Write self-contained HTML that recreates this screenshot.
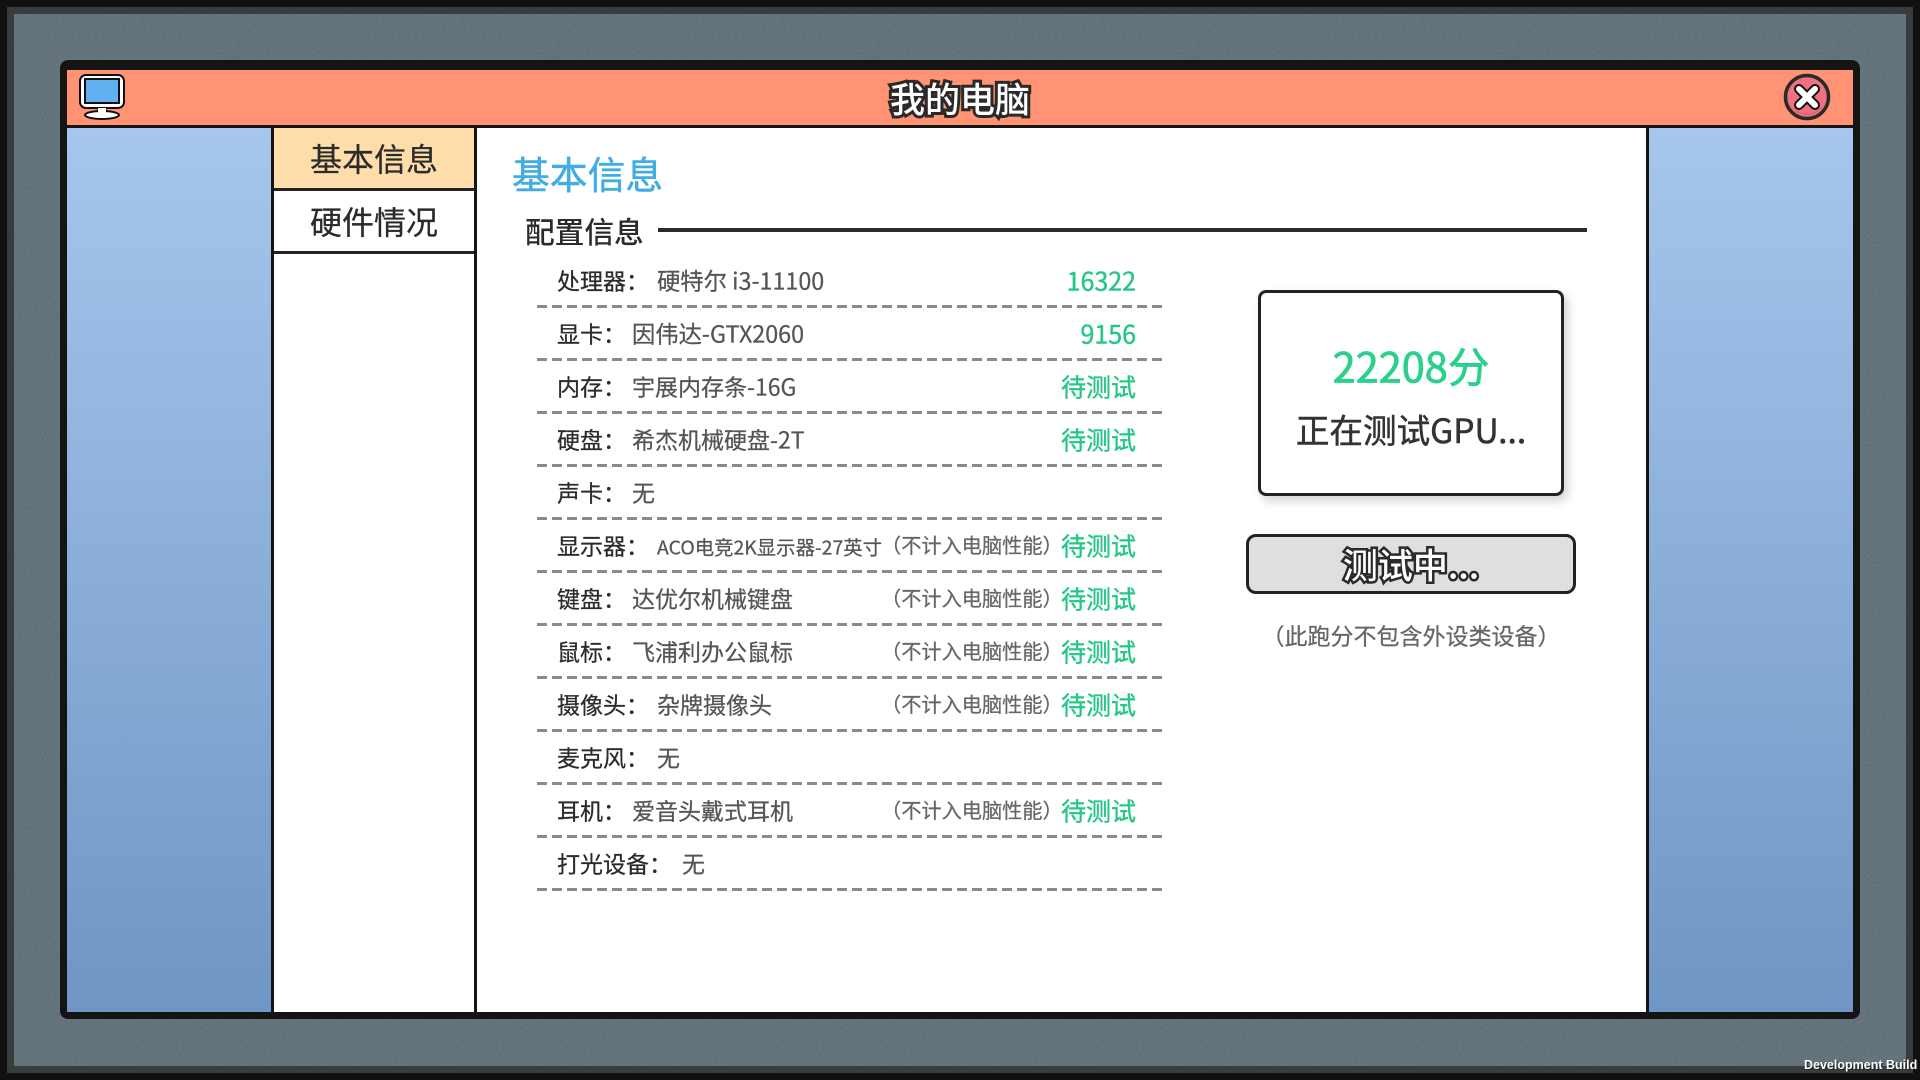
<!DOCTYPE html>
<html lang="zh">
<head>
<meta charset="utf-8">
<title>我的电脑</title>
<style>
html,body{margin:0;padding:0;width:1920px;height:1080px;overflow:hidden;background:#111}
body{position:relative;font-family:"Liberation Sans","Noto Sans CJK SC",sans-serif}
*{box-sizing:border-box}
.a{position:absolute}
.t{position:absolute;white-space:nowrap;line-height:1;font-family:"Noto Sans CJK SC","Liberation Sans",sans-serif;transform:translateY(-50%);-webkit-text-stroke:.25px currentColor}
.l{font-size:23px;color:#2b2b2b;left:557px}
.v{font-size:23px;color:#555}
.s{font-size:19.4px;color:#555}
.n{font-size:20.2px;color:#666;left:881px}
.g{font-size:25px;color:#25c785;right:784px;-webkit-text-stroke:.4px #25c785}
.d{position:absolute;left:537px;width:625px;height:3px;background:repeating-linear-gradient(90deg,#8a8a8a 0,#8a8a8a 10px,transparent 10px,transparent 15px)}
</style>
</head>
<body>
<div class="a" style="left:0;top:0;width:1920px;height:1080px;background:#111"></div>
<div class="a" style="left:7px;top:7px;width:1906px;height:1066px;background:#393c3c"></div>
<div class="a" style="left:14px;top:14px;width:1892px;height:1052px;background:#5f707b"></div>
<svg class="a" style="left:14px;top:14px" width="1892" height="1052">
<filter id="nz" color-interpolation-filters="sRGB"><feTurbulence type="fractalNoise" baseFrequency="0.8" numOctaves="2" seed="3"/><feColorMatrix type="saturate" values="0"/><feComponentTransfer><feFuncA type="linear" slope="0" intercept="0.16"/></feComponentTransfer></filter>
<rect width="1892" height="1052" filter="url(#nz)"/>
</svg>

<div class="a" style="left:60px;top:60px;width:1800px;height:959px;background:#141414;border-radius:8px"></div>
<div class="a" style="left:67px;top:70px;width:1786px;height:55px;background:#ff9373"></div>
<div class="a" style="left:67px;top:128px;width:204px;height:884px;background:linear-gradient(#a6c6ec,#7096c5)"></div>
<div class="a" style="left:1649px;top:128px;width:204px;height:884px;background:linear-gradient(#a6c6ec,#7096c5)"></div>
<div class="a" style="left:274px;top:128px;width:200px;height:884px;background:#fff"></div>
<div class="a" style="left:477px;top:128px;width:1169px;height:884px;background:#fff"></div>

<div class="a" style="left:274px;top:128px;width:200px;height:60px;background:#fddeaa"></div>
<div class="a" style="left:274px;top:188px;width:200px;height:3px;background:#222"></div>
<div class="a" style="left:274px;top:251px;width:200px;height:3px;background:#222"></div>
<div class="t" style="left:274px;width:200px;text-align:center;top:158px;font-size:32px;color:#2b2b2b">基本信息</div>
<div class="t" style="left:274px;width:200px;text-align:center;top:221px;font-size:32px;color:#2b2b2b">硬件情况</div>

<svg class="a" style="left:76px;top:72px" width="52" height="50" viewBox="0 0 52 50">
<rect x="4" y="3" width="44" height="33" rx="6" fill="#fff" stroke="#111" stroke-width="2"/>
<rect x="9" y="7" width="34" height="24" fill="#62b0f0" stroke="#111" stroke-width="2"/>
<path d="M22 36h8v7h-8z" fill="#fff" stroke="#111" stroke-width="1.5"/>
<ellipse cx="26" cy="43" rx="17" ry="4" fill="#fff" stroke="#111" stroke-width="2"/>
<rect x="22" y="36" width="8" height="6" fill="#fff"/>
</svg>

<div class="t" style="left:860px;width:200px;text-align:center;top:98px;font-size:35px;font-weight:500;color:#fff;-webkit-text-stroke:6px #2a2a2a;paint-order:stroke fill">我的电脑</div>

<svg class="a" style="left:1782px;top:72px" width="50" height="50" viewBox="0 0 50 50">
<circle cx="25" cy="25" r="21.5" fill="#f0717f" stroke="#2a2a2a" stroke-width="3.5"/>
<path d="M7 30a19 19 0 0 0 36 0a19 17 0 0 1-36 0z" fill="#d85f6e"/>
<path d="M17 17L33 33M33 17L17 33" stroke="#111" stroke-width="10" stroke-linecap="round"/>
<path d="M17 17L33 33M33 17L17 33" stroke="#fff" stroke-width="6" stroke-linecap="round"/>
</svg>

<div class="t" style="left:512px;top:173px;font-size:37.8px;color:#41ade2;-webkit-text-stroke:.5px #41ade2">基本信息</div>
<div class="t" style="left:525px;top:231px;font-size:29.7px;color:#2b2b2b;font-weight:500;-webkit-text-stroke:0">配置信息</div>
<div class="a" style="left:658px;top:228px;width:929px;height:4px;background:#2b2b2b"></div>

<div class="t l" style="top:280px">处理器：</div><div class="t v" style="left:657px;top:280px;font-size:23.3px">硬特尔 i3-11100</div><div class="t g" style="top:281px">16322</div>
<div class="d" style="top:305px"></div>
<div class="t l" style="top:333px">显卡：</div><div class="t v" style="left:632px;top:333px;font-size:23.3px">因伟达-GTX2060</div><div class="t g" style="top:334px">9156</div>
<div class="d" style="top:358px"></div>
<div class="t l" style="top:386px">内存：</div><div class="t v" style="left:632px;top:386px">宇展内存条-16G</div><div class="t g" style="top:387px">待测试</div>
<div class="d" style="top:411px"></div>
<div class="t l" style="top:439px">硬盘：</div><div class="t v" style="left:632px;top:439px">希杰机械硬盘-2T</div><div class="t g" style="top:440px">待测试</div>
<div class="d" style="top:464px"></div>
<div class="t l" style="top:492px">声卡：</div><div class="t v" style="left:632px;top:492px">无</div>
<div class="d" style="top:517px"></div>
<div class="t l" style="top:545px">显示器：</div><div class="t s" style="left:657px;top:546px">ACO电竞2K显示器-27英寸</div><div class="t n" style="top:545px">（不计入电脑性能）</div><div class="t g" style="top:546px">待测试</div>
<div class="d" style="top:570px"></div>
<div class="t l" style="top:598px">键盘：</div><div class="t v" style="left:632px;top:598px">达优尔机械键盘</div><div class="t n" style="top:598px">（不计入电脑性能）</div><div class="t g" style="top:599px">待测试</div>
<div class="d" style="top:623px"></div>
<div class="t l" style="top:651px">鼠标：</div><div class="t v" style="left:632px;top:651px">飞浦利办公鼠标</div><div class="t n" style="top:651px">（不计入电脑性能）</div><div class="t g" style="top:652px">待测试</div>
<div class="d" style="top:676px"></div>
<div class="t l" style="top:704px">摄像头：</div><div class="t v" style="left:657px;top:704px">杂牌摄像头</div><div class="t n" style="top:704px">（不计入电脑性能）</div><div class="t g" style="top:705px">待测试</div>
<div class="d" style="top:729px"></div>
<div class="t l" style="top:757px">麦克风：</div><div class="t v" style="left:657px;top:757px">无</div>
<div class="d" style="top:782px"></div>
<div class="t l" style="top:810px">耳机：</div><div class="t v" style="left:632px;top:810px">爱音头戴式耳机</div><div class="t n" style="top:810px">（不计入电脑性能）</div><div class="t g" style="top:811px">待测试</div>
<div class="d" style="top:835px"></div>
<div class="t l" style="top:863px">打光设备：</div><div class="t v" style="left:682px;top:863px">无</div>
<div class="d" style="top:888px"></div>

<div class="a" style="left:1258px;top:290px;width:306px;height:206px;background:#fff;border:3px solid #222;border-radius:8px;box-shadow:4px 5px 10px rgba(0,0,0,.18)"></div>
<div class="t" style="left:1258px;width:306px;text-align:center;top:365px;font-size:41.5px;color:#2bd08b;-webkit-text-stroke:.8px #2bd08b">22208分</div>
<div class="t" style="left:1258px;width:306px;text-align:center;top:429px;font-size:33.6px;color:#333;-webkit-text-stroke:.5px #333">正在测试GPU...</div>

<div class="a" style="left:1246px;top:534px;width:330px;height:60px;background:#dfdfdf;border:3px solid #222;border-radius:10px"></div>
<div class="t" style="left:1246px;width:330px;text-align:center;top:564px;font-size:35px;font-weight:500;color:#fff;-webkit-text-stroke:5px #2a2a2a;paint-order:stroke fill">测试中...</div>

<div class="t" style="left:1246px;width:330px;text-align:center;top:635px;font-size:23px;color:#666">（此跑分不包含外设类设备）</div>

<div class="a" style="left:1804px;top:1058px;width:116px;line-height:15px;font-size:12.5px;font-weight:bold;color:#fff;white-space:nowrap;text-shadow:1px 1px 0 #222">Development Build</div>
</body>
</html>
